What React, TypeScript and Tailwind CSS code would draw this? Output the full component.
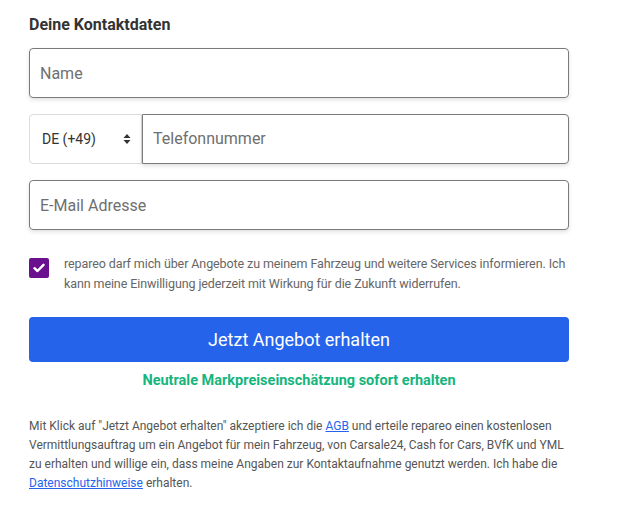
import React, { useState } from 'react';

export default function App() {
  const [consent, setConsent] = useState(true);

  return (
    <div className="bg-white min-h-screen font-['Roboto',sans-serif] text-[#333]">
      <div className="w-[540px] ml-[29px] pt-[14px]">
        {/* Heading */}
        <h2 className="text-[16px] font-bold leading-[22px] text-[#333] mb-[12px]">
          Deine Kontaktdaten
        </h2>

        {/* Name */}
        <input
          placeholder="Name"
          className="w-full h-[50px] px-[10px] text-[16px] rounded-[4px] border border-[#7a7a7a] shadow-[0_2px_4px_rgba(0,0,0,0.12)] placeholder:text-[#6f6f6f] outline-none"
        />

        {/* Phone */}
        <div className="flex mt-[16px] h-[50px]">
          <div className="w-[113px] flex items-center justify-between pl-[12px] pr-[10px] border border-[#dcdcdc] rounded-l-[4px] text-[14px] text-[#333]">
            <span>DE (+49)</span>
            <svg width="8" height="12" viewBox="0 0 8 12" className="fill-[#333]">
              <path d="M4 1 L7.5 5 H0.5 Z" />
              <path d="M4 11 L7.5 7 H0.5 Z" />
            </svg>
          </div>
          <input
            placeholder="Telefonnummer"
            className="flex-1 px-[10px] text-[16px] rounded-r-[4px] border border-[#7a7a7a] shadow-[0_2px_4px_rgba(0,0,0,0.12)] placeholder:text-[#6f6f6f] outline-none"
          />
        </div>

        {/* Email */}
        <input
          placeholder="E-Mail Adresse"
          className="w-full h-[50px] mt-[16px] px-[10px] text-[16px] rounded-[4px] border border-[#7a7a7a] shadow-[0_2px_4px_rgba(0,0,0,0.12)] placeholder:text-[#6f6f6f] outline-none"
        />

        {/* Consent */}
        <label className="flex items-start mt-[24px] cursor-pointer">
          <span
            onClick={() => setConsent(!consent)}
            className={`mt-[4px] w-[20px] h-[20px] shrink-0 rounded-[2px] flex items-center justify-center ${
              consent ? 'bg-[#6a0f8e]' : 'bg-white border border-[#999]'
            }`}
          >
            {consent && (
              <svg width="12" height="10" viewBox="0 0 12 10" fill="none">
                <path d="M1.5 5.2 L4.5 8 L10.5 1.8" stroke="white" strokeWidth="2.4" strokeLinecap="round" strokeLinejoin="round" />
              </svg>
            )}
          </span>
          <span className="ml-[15px] text-[12.5px] tracking-[-0.1px] leading-[20px] text-[#666]">
            repareo darf mich über Angebote zu meinem Fahrzeug und weitere Services informieren. Ich kann meine Einwilligung jederzeit mit Wirkung für die Zukunft widerrufen.
          </span>
        </label>

        {/* Submit */}
        <button className="w-full h-[45px] mt-[23px] bg-[#2563eb] rounded-[4px] text-white text-[18px]">
          Jetzt Angebot erhalten
        </button>

        <p className="text-center text-[14.5px] font-bold text-[#16b57e] mt-[9px] leading-[20px]">
          Neutrale Markpreiseinschätzung sofort erhalten
        </p>

        {/* Legal */}
        <p className="mt-[26px] text-[12px] leading-[19px] text-[#555]">
          Mit Klick auf "Jetzt Angebot erhalten" akzeptiere ich die{' '}
          <a href="#" className="text-[#2563eb] underline">AGB</a> und erteile repareo einen kostenlosen
          Vermittlungsauftrag um ein Angebot für mein Fahrzeug, von Carsale24, Cash for Cars, BVfK und YML
          zu erhalten und willige ein, dass meine Angaben zur Kontaktaufnahme genutzt werden. Ich habe die{' '}
          <a href="#" className="text-[#2563eb] underline">Datenschutzhinweise</a> erhalten.
        </p>
      </div>
    </div>
  );
}
